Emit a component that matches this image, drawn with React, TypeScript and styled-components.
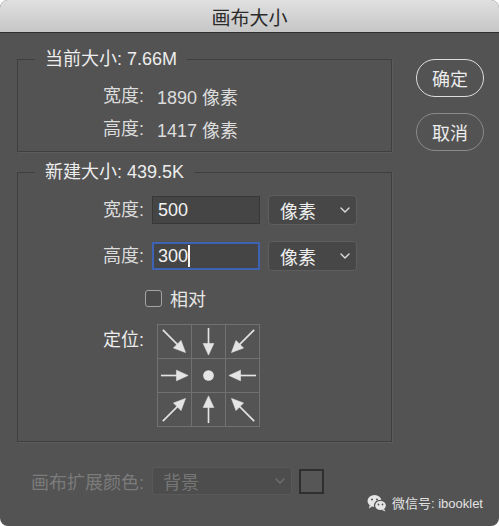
import styled, { createGlobalStyle } from 'styled-components';

const GlobalStyle = createGlobalStyle`
  html, body {
    margin: 0;
    padding: 0;
    background: #ffffff;
  }
  * {
    box-sizing: border-box;
  }
`;

const FONT = `"Liberation Sans", "Noto Sans CJK SC", sans-serif`;

const Window = styled.div`
  position: relative;
  width: 499px;
  height: 526px;
  background: #535353;
  border-radius: 8px;
  overflow: hidden;
  font-family: ${FONT};
  color: #e6e6e6;
`;

const TitleBar = styled.div`
  height: 33px;
  display: flex;
  align-items: center;
  justify-content: center;
  padding-top: 1px;
  background: linear-gradient(#e0e0e0, #c6c6c6);
  border-bottom: 1px solid #2e2e2e;
  font-size: 19px;
  color: #2b2b2b;
`;

const Body = styled.div`
  display: flex;
  align-items: flex-start;
  padding: 16px 0 0 17px;
`;

const LeftColumn = styled.div`
  width: 375px;
  display: flex;
  flex-direction: column;
`;

const Group = styled.fieldset<{ $gapTop?: number }>`
  margin: ${({ $gapTop }) => $gapTop ?? 0}px 0 0 0;
  padding: 0 0 0 17px;
  border: 1px solid #3f3f3f;
  box-shadow: 1px 1px 0 #5c5c5c;
  min-width: 0;
`;

const Legend = styled.legend`
  margin: 0;
  padding: 0 10px;
  font-size: 18px;
  line-height: 20px;
  color: #ededed;
`;

const GroupContent = styled.div<{ $top: number; $bottom: number }>`
  padding: ${({ $top }) => $top}px 0 ${({ $bottom }) => $bottom}px 68px;
`;

const InfoRow = styled.div`
  height: 33px;
  display: flex;
  align-items: center;
  font-size: 18px;
  color: #dcdcdc;
`;

const FieldLabel = styled.span<{ $gap: number }>`
  width: 43px;
  margin-right: ${({ $gap }) => $gap}px;
  font-size: 18px;
  line-height: 20px;
  white-space: nowrap;
  color: #dcdcdc;
`;

const FieldRow = styled.div<{ $gapTop?: number }>`
  display: flex;
  align-items: center;
  height: 30px;
  margin-top: ${({ $gapTop }) => $gapTop ?? 0}px;
`;

const NumberInput = styled.div<{ $focused?: boolean }>`
  width: 108px;
  height: 28px;
  display: flex;
  align-items: center;
  padding-left: ${({ $focused }) => ($focused ? 4 : 5)}px;
  background: #454545;
  border: ${({ $focused }) => ($focused ? '2px solid #3e63b4' : '1px solid #383838')};
  font-size: 18px;
  color: #f2f2f2;
`;

const Caret = styled.span`
  width: 1.5px;
  height: 22px;
  background: #f2f2f2;
`;

const UnitSelect = styled.div`
  width: 89px;
  height: 30px;
  margin-left: 8px;
  display: flex;
  align-items: center;
  justify-content: space-between;
  padding: 0 6px 0 11px;
  background: #474747;
  border: 1px solid #5e5e5e;
  border-radius: 4px;
  font-size: 18px;
  color: #efefef;
`;

const CheckRow = styled.label`
  display: flex;
  align-items: center;
  height: 18px;
  margin: 18px 0 0 42px;
  font-size: 18px;
  color: #e6e6e6;
  gap: 8px;
`;

const CheckBox = styled.span`
  width: 17px;
  height: 17px;
  border: 1.5px solid #a4a4a4;
  border-radius: 3px;
  background: #4b4b4b;
`;

const AnchorRow = styled.div`
  display: flex;
  align-items: flex-start;
  margin-top: 17px;
`;

const AnchorLabel = styled(FieldLabel)`
  margin-top: 6px;
  color: #ededed;
`;

const AnchorGrid = styled.div`
  display: grid;
  grid-template-columns: repeat(3, 33px);
  grid-template-rows: repeat(3, 33px);
  gap: 1px;
  padding: 1px;
  background: #717171;
`;

const AnchorCell = styled.div`
  background: #545454;
  display: flex;
  align-items: center;
  justify-content: center;
`;

const ExtendRow = styled.div`
  display: flex;
  align-items: center;
  margin: 25px 0 0 14px;
  height: 28px;
`;

const DisabledLabel = styled.span`
  font-size: 18px;
  color: #7b7b7b;
  margin-right: 8px;
  white-space: nowrap;
`;

const DisabledSelect = styled.div`
  width: 140px;
  height: 28px;
  display: flex;
  align-items: center;
  justify-content: space-between;
  padding: 0 6px 0 10px;
  background: #4d4d4d;
  border: 1px solid #595959;
  border-radius: 3px;
  font-size: 18px;
  color: #767676;
`;

const Swatch = styled.div`
  width: 25px;
  height: 25px;
  margin-left: 7px;
  border: 2px solid #2f2f2f;
  background: #565656;
`;

const RightColumn = styled.div`
  margin-left: 24px;
  padding-top: 10px;
  display: flex;
  flex-direction: column;
  gap: 16px;
`;

const PillButton = styled.button<{ $primary?: boolean }>`
  width: 68px;
  height: 38px;
  border-radius: 19px;
  background: transparent;
  border: 1.5px solid ${({ $primary }) => ($primary ? '#dedede' : '#8a8a8a')};
  color: #ececec;
  font-family: ${FONT};
  font-size: 18px;
  padding: 0;
  cursor: pointer;
`;

const Watermark = styled.div`
  position: absolute;
  right: 16px;
  bottom: 14px;
  display: flex;
  align-items: center;
  gap: 5px;
  font-size: 13px;
  color: #e2e2e2;
`;

const Chevron = ({ color }: { color: string }) => (
  <svg width="10" height="6" viewBox="0 0 10 6">
    <path d="M1 1L5 5L9 1" stroke={color} strokeWidth="1.4" fill="none" strokeLinecap="round" strokeLinejoin="round" />
  </svg>
);

const Arrow = ({ angle }: { angle: number }) => {
  const diagonal = angle % 90 !== 0;
  const start = diagonal ? 0 : 3;
  const tip = diagonal ? 33 : 31;
  return (
    <svg width="33" height="33" viewBox="0 0 34 34">
      <g transform={`rotate(${angle} 17 17)`} fill="#e4e4e4" stroke="#e4e4e4">
        <line x1={start} y1="17" x2={tip - 9} y2="17" strokeWidth="1.7" />
        <path d={`M${tip - 12} 11.5L${tip} 17L${tip - 12} 22.5Z`} strokeWidth="0.6" strokeLinejoin="round" />
      </g>
    </svg>
  );
};

const CenterDot = () => (
  <svg width="33" height="33" viewBox="0 0 34 34">
    <circle cx="17" cy="17" r="5.5" fill="#e4e4e4" />
  </svg>
);

const WeChatIcon = () => (
  <svg width="20" height="18" viewBox="0 0 20 18">
    <ellipse cx="7.5" cy="7" rx="7" ry="6" fill="#e6e6e6" />
    <path d="M2.5 11.5L2 14.5L5 12.5Z" fill="#e6e6e6" />
    <ellipse cx="13.5" cy="11.5" rx="6" ry="5.2" fill="#e6e6e6" stroke="#535353" strokeWidth="1.3" />
    <path d="M17 15L18.5 17.5L15 16Z" fill="#e6e6e6" />
    <circle cx="5" cy="5.5" r="1" fill="#535353" />
    <circle cx="10" cy="5.5" r="1" fill="#535353" />
    <circle cx="11.5" cy="10.5" r="0.9" fill="#535353" />
    <circle cx="15.5" cy="10.5" r="0.9" fill="#535353" />
  </svg>
);

const anchors: (number | null)[] = [45, 90, 135, 0, null, 180, -45, -90, -135];

export default function App() {
  return (
    <>
      <GlobalStyle />
      <Window>
        <TitleBar>画布大小</TitleBar>
        <Body>
          <LeftColumn>
            <Group>
              <Legend>当前大小: 7.66M</Legend>
              <GroupContent $top={10} $bottom={6}>
                <InfoRow>
                  <FieldLabel $gap={11}>宽度:</FieldLabel>1890 像素
                </InfoRow>
                <InfoRow>
                  <FieldLabel $gap={11}>高度:</FieldLabel>1417 像素
                </InfoRow>
              </GroupContent>
            </Group>

            <Group $gapTop={10}>
              <Legend>新建大小: 439.5K</Legend>
              <GroupContent $top={13} $bottom={14}>
                <FieldRow>
                  <FieldLabel $gap={6}>宽度:</FieldLabel>
                  <NumberInput>500</NumberInput>
                  <UnitSelect>
                    像素
                    <Chevron color="#dcdcdc" />
                  </UnitSelect>
                </FieldRow>
                <FieldRow $gapTop={16}>
                  <FieldLabel $gap={6}>高度:</FieldLabel>
                  <NumberInput $focused>
                    300
                    <Caret />
                  </NumberInput>
                  <UnitSelect>
                    像素
                    <Chevron color="#dcdcdc" />
                  </UnitSelect>
                </FieldRow>
                <CheckRow>
                  <CheckBox />
                  相对
                </CheckRow>
                <AnchorRow>
                  <AnchorLabel $gap={11}>定位:</AnchorLabel>
                  <AnchorGrid>
                    {anchors.map((a, i) => (
                      <AnchorCell key={i}>{a === null ? <CenterDot /> : <Arrow angle={a} />}</AnchorCell>
                    ))}
                  </AnchorGrid>
                </AnchorRow>
              </GroupContent>
            </Group>

            <ExtendRow>
              <DisabledLabel>画布扩展颜色:</DisabledLabel>
              <DisabledSelect>
                背景
                <Chevron color="#707070" />
              </DisabledSelect>
              <Swatch />
            </ExtendRow>
          </LeftColumn>

          <RightColumn>
            <PillButton $primary>确定</PillButton>
            <PillButton>取消</PillButton>
          </RightColumn>
        </Body>
        <Watermark>
          <WeChatIcon />
          微信号: ibooklet
        </Watermark>
      </Window>
    </>
  );
}
